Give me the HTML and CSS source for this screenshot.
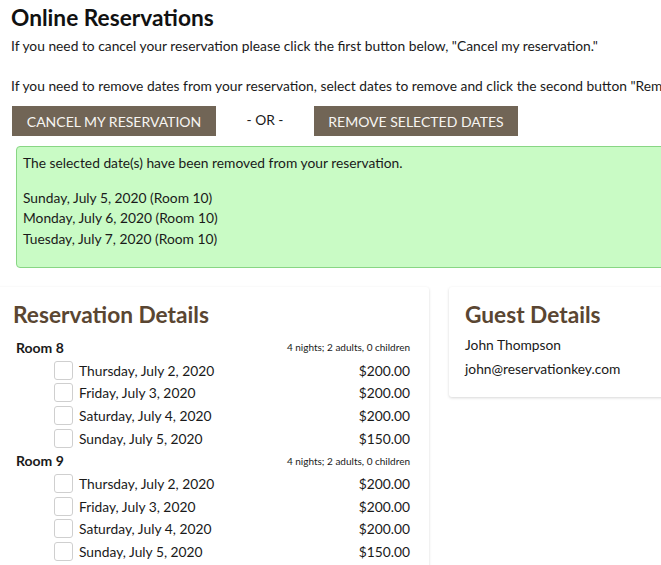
FILE: index.html
```html
<!DOCTYPE html>
<html lang="en">
<head>
    <meta charset="UTF-8">
    <meta name="viewport" content="width=device-width, initial-scale=1.0">
    <title>Online Reservations</title>
    <link rel="stylesheet" href="styles.css">
</head>
<body>
    <div class="page">
        <h1>Online Reservations</h1>
        <p class="intro">If you need to cancel your reservation please click the first button below, "Cancel my reservation."</p>
        <p class="intro">If you need to remove dates from your reservation, select dates to remove and click the second button "Remove selected dates."</p>

        <div class="actions">
            <button class="btn">Cancel my reservation</button>
            <span class="or">- OR -</span>
            <button class="btn">Remove selected dates</button>
        </div>

        <!-- Confirmation message -->
        <div class="notice">
            <p class="notice-title">The selected date(s) have been removed from your reservation.</p>
            <p>Sunday, July 5, 2020 (Room 10)<br>Monday, July 6, 2020 (Room 10)<br>Tuesday, July 7, 2020 (Room 10)</p>
        </div>

        <div class="cards">
            <div class="card reservation">
                <h2>Reservation Details</h2>

                <div class="room-head">
                    <span class="room-name">Room 8</span>
                    <span class="room-meta">4 nights; 2 adults, 0 children</span>
                </div>
                <label class="night"><input type="checkbox"><span class="date">Thursday, July 2, 2020</span><span class="price">$200.00</span></label>
                <label class="night"><input type="checkbox"><span class="date">Friday, July 3, 2020</span><span class="price">$200.00</span></label>
                <label class="night"><input type="checkbox"><span class="date">Saturday, July 4, 2020</span><span class="price">$200.00</span></label>
                <label class="night"><input type="checkbox"><span class="date">Sunday, July 5, 2020</span><span class="price">$150.00</span></label>

                <div class="room-head">
                    <span class="room-name">Room 9</span>
                    <span class="room-meta">4 nights; 2 adults, 0 children</span>
                </div>
                <label class="night"><input type="checkbox"><span class="date">Thursday, July 2, 2020</span><span class="price">$200.00</span></label>
                <label class="night"><input type="checkbox"><span class="date">Friday, July 3, 2020</span><span class="price">$200.00</span></label>
                <label class="night"><input type="checkbox"><span class="date">Saturday, July 4, 2020</span><span class="price">$200.00</span></label>
                <label class="night"><input type="checkbox"><span class="date">Sunday, July 5, 2020</span><span class="price">$150.00</span></label>
            </div>

            <div class="card guest">
                <h2>Guest Details</h2>
                <p class="guest-name">John Thompson</p>
                <p class="guest-email">john@reservationkey.com</p>
            </div>
        </div>
    </div>
</body>
</html>
```

FILE: styles.css
```css
* {
    margin: 0;
    padding: 0;
    box-sizing: border-box;
}

body {
    font-family: Lato, 'Liberation Sans', Arial, sans-serif;
    font-size: 13.8px;
    color: #1a1a1a;
    background: #fff;
    overflow: hidden;
}

.page {
    width: 900px;
    padding: 5px 0 0 11px;
}

h1 {
    font-size: 22.7px;
    line-height: 26px;
    font-weight: 700;
    color: #111;
    margin-bottom: 5px;
}

.intro {
    line-height: 20px;
    margin-bottom: 20px;
}

.actions {
    display: flex;
    align-items: center;
    margin: -10px 0 0 1px;
}

.btn {
    width: 204px;
    height: 30px;
    background: #716556;
    color: #f7f5f2;
    border: none;
    font-family: inherit;
    font-size: 14px;
    text-transform: uppercase;
    cursor: pointer;
}

.or {
    width: 98px;
    text-align: center;
    margin-top: -3px;
}

/* green confirmation box */
.notice {
    margin: 10px 0 0 5px;
    background: #c9fbc5;
    border: 1px solid #88d684;
    border-radius: 4px;
    padding: 6px 6px 18px 6px;
    line-height: 20.5px;
}

.notice-title {
    margin-bottom: 14px;
}

.cards {
    display: flex;
    align-items: flex-start;
    gap: 20px;
    margin: 19px 0 0 -14px;
}

.card {
    background: #fff;
    border-radius: 3px;
    box-shadow: 0 1px 3px rgba(0, 0, 0, 0.16);
}

.card h2 {
    font-size: 22.7px;
    line-height: 26px;
    font-weight: 700;
    color: #5a4632;
}

.reservation {
    width: 432px;
    padding: 15px 19px 10px 19px;
}

.reservation h2 {
    margin: 0 0 8px -3px;
}

.room-head,
.night {
    display: flex;
    align-items: center;
    height: 22.7px;
}

.room-name {
    font-weight: 700;
    font-size: 14px;
}

.room-meta {
    margin-left: auto;
    font-size: 10px;
}

.night input {
    appearance: none;
    -webkit-appearance: none;
    width: 19px;
    height: 19px;
    border: 1px solid #cfcfcf;
    border-radius: 3px;
    background: #fff;
    margin: 0 6px 0 38px;
}

.price {
    margin-left: auto;
}

.guest {
    width: 300px;
    padding: 15px 16px 18px 16px;
}

.guest-name {
    line-height: 20px;
    margin-top: 7px;
}

.guest-email {
    line-height: 20px;
    margin-top: 4px;
}
```
